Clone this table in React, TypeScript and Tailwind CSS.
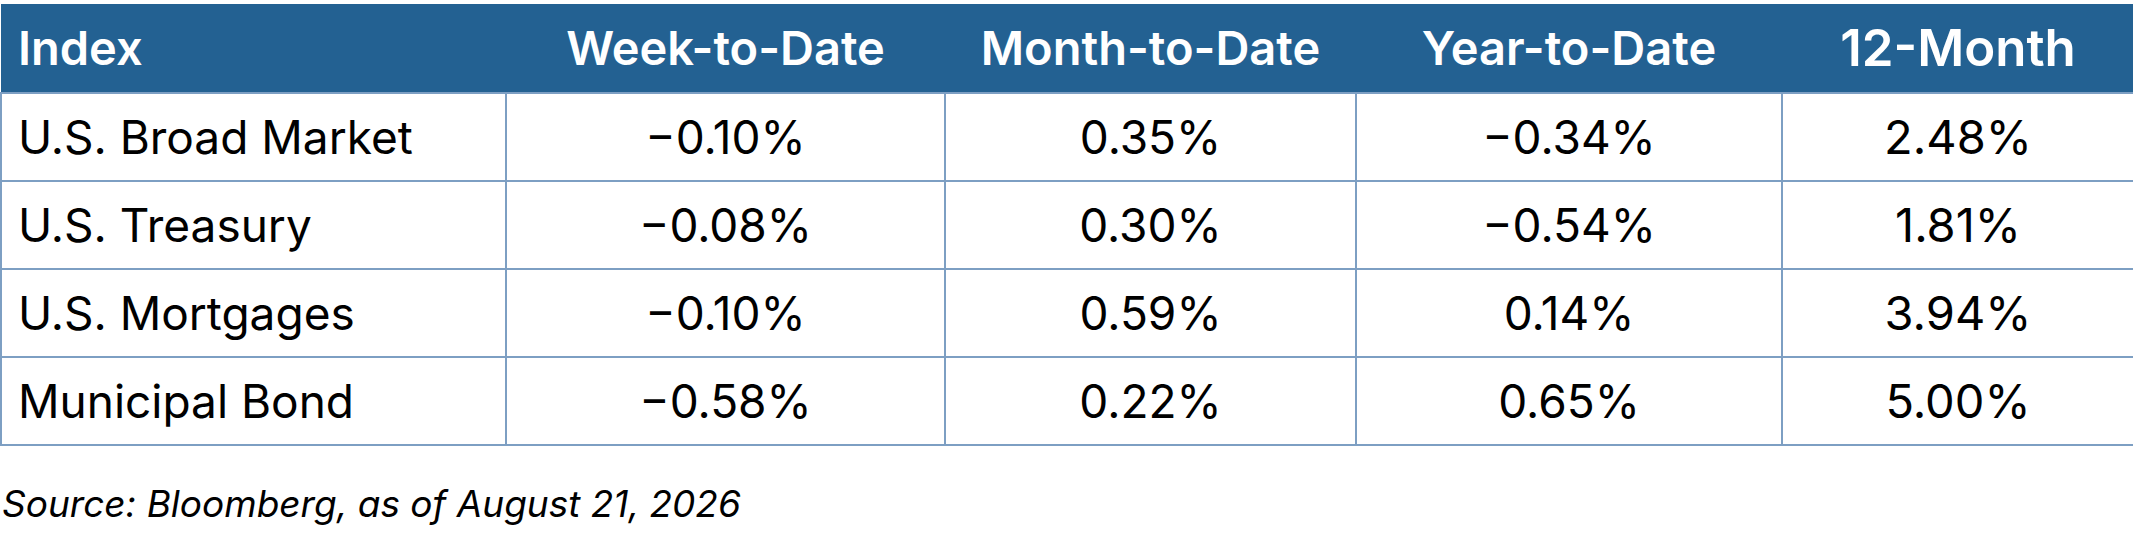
import React from 'react';

interface Row {
    name: string;
    week: string;
    month: string;
    year: string;
    twelve: string;
}

const rows: Row[] = [
    { name: 'U.S. Broad Market', week: '\u22120.10%', month: '0.35%', year: '\u22120.34%', twelve: '2.48%' },
    { name: 'U.S. Treasury', week: '\u22120.08%', month: '0.30%', year: '\u22120.54%', twelve: '1.81%' },
    { name: 'U.S. Mortgages', week: '\u22120.10%', month: '0.59%', year: '0.14%', twelve: '3.94%' },
    { name: 'Municipal Bond', week: '\u22120.58%', month: '0.22%', year: '0.65%', twelve: '5.00%' },
];

const App: React.FC = () => {
    const cell = 'border-2 border-[#7d9fc3] text-center align-middle';

    return (
        <div className="bg-white min-h-screen text-black font-['Inter','Noto_Sans',sans-serif]">
            <table className="table-fixed border-collapse w-[2133px] mt-1">
                <colgroup>
                    <col className="w-[505px]" />
                    <col className="w-[439px]" />
                    <col className="w-[411px]" />
                    <col className="w-[426px]" />
                    <col className="w-[352px]" />
                </colgroup>
                <thead>
                    <tr className="bg-[#236192] text-white h-[89px]">
                        <th className="text-left pl-[17px] text-[47px] font-semibold">Index</th>
                        <th className="text-center text-[47px] font-semibold">Week-to-Date</th>
                        <th className="text-center text-[47px] font-semibold">Month-to-Date</th>
                        <th className="text-center text-[47px] font-semibold">Year-to-Date</th>
                        <th className="text-center text-[51px] font-semibold">12-Month</th>
                    </tr>
                </thead>
                <tbody className="text-[46px]">
                    {rows.map((row) => (
                        <tr key={row.name} className="h-[88px]">
                            <td className="border-2 border-[#7d9fc3] pl-[16px] align-middle">{row.name}</td>
                            <td className={cell}>{row.week}</td>
                            <td className={cell}>{row.month}</td>
                            <td className={cell}>{row.year}</td>
                            <td className={`${cell} text-[47px]`}>{row.twelve}</td>
                        </tr>
                    ))}
                </tbody>
            </table>
            <p className="mt-[36px] pl-[2px] text-[37px] italic leading-[1.2]">
                Source: Bloomberg, as of August 21, 2026
            </p>
        </div>
    );
};

export default App;
